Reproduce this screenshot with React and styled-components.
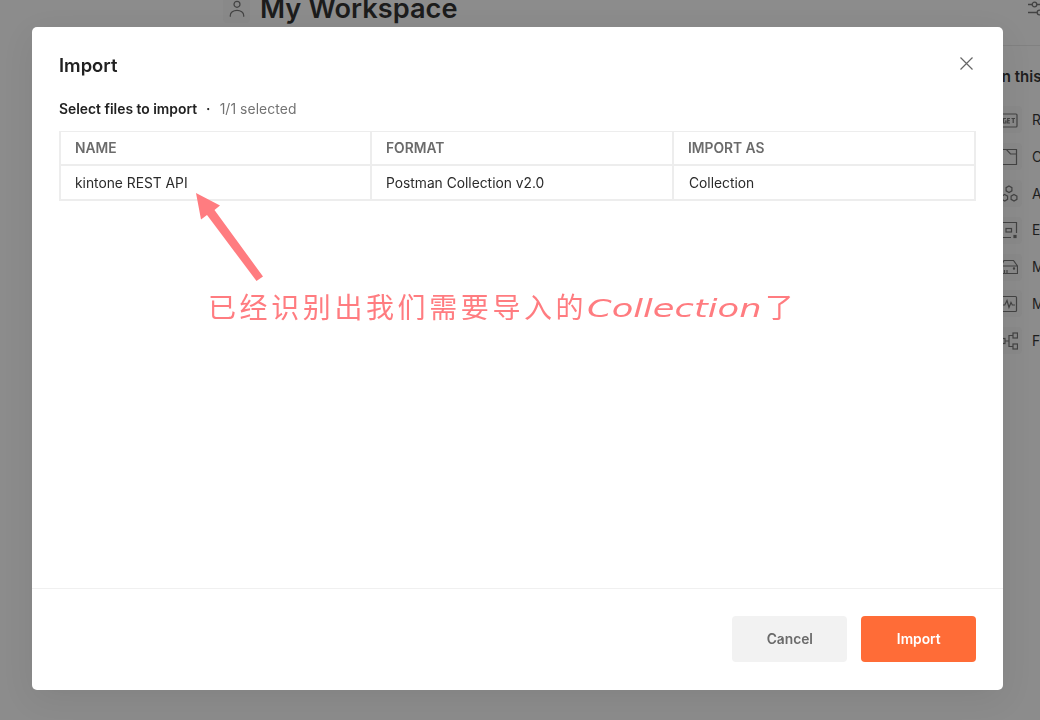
import React from "react";
import styled, { createGlobalStyle } from "styled-components";

const GlobalStyle = createGlobalStyle`
  * { box-sizing: border-box; }
  body {
    margin: 0;
    overflow: hidden;
    background: #8c8c8c;
    font-family: Inter, "Noto Sans CJK SC", sans-serif;
    color: #212121;
  }
`;

const Page = styled.div`
  width: 1040px;
  height: 720px;
  overflow: hidden;
  display: grid;
  grid-template-columns: 980px 60px;
  background: #8c8c8c;
`;

const WorkspaceHeader = styled.header`
  display: flex;
  align-items: center;
  gap: 10px;
  height: 34px;
  margin: -8px 0 0 223px;
`;

const IconTile = styled.span`
  flex: none;
  display: flex;
  align-items: center;
  justify-content: center;
  width: 27px;
  height: 27px;
  border-radius: 4px;
  background: #898989;
`;

const WorkspaceTitle = styled.h1`
  margin: 0;
  font-size: 27.2px;
  line-height: 34px;
  font-weight: 600;
  color: #1c1c1c;
`;

const Sidebar = styled.aside`
  overflow: hidden;
  white-space: nowrap;
`;

const SidebarTools = styled.div`
  display: flex;
  height: 46px;
  padding: 0 0 0 47px;
  border-bottom: 1px solid #818181;
`;

const SidebarTitle = styled.h2`
  margin: 21px 0 0 17.7px;
  font-size: 15px;
  line-height: 20px;
  font-weight: 600;
  color: #1e1e1e;
`;

const SidebarList = styled.ul`
  list-style: none;
  margin: 14.6px 0 0;
  padding: 0 0 0 15px;
`;

const SidebarItem = styled.li`
  display: flex;
  align-items: center;
  gap: 10px;
  height: 36.8px;
  font-size: 13.8px;
  color: #1e1e1e;
`;

const Glyph = styled.svg`
  display: block;
  flex: none;
  fill: none;
  stroke: ${(p) => p.$color || "#434343"};
  stroke-width: ${(p) => p.$weight || 1.2};
`;

const Overlay = styled.div`
  position: fixed;
  inset: 0;
  display: flex;
  align-items: flex-start;
  padding: 26.6px 0 0 31.7px;
`;

const Dialog = styled.section`
  display: flex;
  flex-direction: column;
  width: 971.3px;
  height: 663px;
  border-radius: 5px;
  background: #fff;
  box-shadow: 0 9px 34px rgba(0, 0, 0, 0.07);
`;

const DialogHeader = styled.header`
  display: flex;
  justify-content: space-between;
  align-items: flex-start;
  padding: 26px 29px 0 27.3px;
  height: 70.9px;
`;

const DialogTitle = styled.h2`
  margin: 0;
  font-size: 18.4px;
  line-height: 25px;
  font-weight: 600;
`;

const CloseButton = styled.button`
  margin: 3px 0 0;
  padding: 0;
  border: 0;
  background: none;
`;

const DialogBody = styled.div`
  flex: 1;
  padding: 0 27px 0 27.3px;
`;

const Selection = styled.p`
  display: flex;
  margin: 0 0 12px;
  padding-top: 1.5px;
  font-size: 13.87px;
  line-height: 20px;
  font-weight: 600;
`;

const Dot = styled.span`
  width: 22.6px;
  text-align: center;
`;

const Count = styled.span`
  font-weight: 400;
  color: #737373;
  letter-spacing: 0.08px;
`;

const Table = styled.div`
  border: 2px solid #ededed;
  border-top-width: 1px;
`;

const Row = styled.div`
  display: grid;
  grid-template-columns: 311px 302px 1fr;
  height: ${(p) => (p.$head ? "34px" : "33px")};
  border-bottom: ${(p) => (p.$head ? "2px solid #ededed" : "0")};
  font-size: 13.8px;
  line-height: ${(p) => (p.$head ? "32px" : "34px")};
  font-weight: ${(p) => (p.$head ? 600 : 400)};
  color: ${(p) => (p.$head ? "#6b6b6b" : "#2b2b2b")};
`;

const Cell = styled.div`
  padding-left: ${(p) => p.$inset || 14}px;
  border-right: ${(p) => (p.$last ? "0" : "2px solid #ededed")};
`;

const DialogFooter = styled.footer`
  display: flex;
  justify-content: flex-end;
  gap: 14px;
  height: 102px;
  padding: 27.4px 27.2px 0;
  border-top: 1.5px solid #f0f0f0;
`;

const Button = styled.button`
  width: 115px;
  height: 46px;
  padding: 0 0 0 1px;
  border: 0;
  border-radius: 4px;
  font: 600 13.8px Inter, sans-serif;
  background: ${(p) => (p.$primary ? "#ff6c37" : "#f2f2f2")};
  color: ${(p) => (p.$primary ? "#fff" : "#6b6b6b")};
`;

const Arrow = styled.svg`
  position: absolute;
  left: 190px;
  top: 188px;
`;

const Note = styled.div`
  position: absolute;
  left: 208px;
  top: 286px;
  display: flex;
  height: 40px;
  line-height: 40px;
  white-space: nowrap;
  color: #ff7c80;
`;

const Hanzi = styled.span`
  font-family: "Noto Sans CJK SC", sans-serif;
  font-size: 28px;
  font-weight: 400;
  letter-spacing: 3.6px;
`;

const Latin = styled.span`
  width: 178px;
  padding-top: 3px;
  font-family: "DejaVu Sans", sans-serif;
  font-size: 24px;
  font-style: italic;
  transform: scaleX(1.47);
  transform-origin: left;
`;

const sidebarItems = [
  {
    label: "R",
    icon: (
      <>
        <rect x="1" y="3" width="16" height="13" rx="1" />
        <path d="M6 7.500H3.500V12H6V10H5M10 7.500H7.700V12H10M7.700 9.700H9.700M11.500 7.500H15M13.200 7.500V12" />
      </>
    ),
  },
  {
    label: "C",
    icon: <path d="M0 1.500h6.500l4 4.500h6v10.500H0M7 1.500h9.500V6" />,
  },
  {
    label: "A",
    icon: (
      <path d="M9 1l2.900 1.600v3.200L9 7.500 6.100 5.800V2.600zM4.700 9.500l2.900 1.600v3.200l-2.900 1.700-2.900-1.700v-3.200zM14 9.500l2.900 1.600v3.200L14 16l-2.900-1.700v-3.200z" />
    ),
  },
  {
    label: "E",
    icon: (
      <>
        <path d="M1 1.500h15.500V12M1 1.500v15h10" />
        <rect x="6" y="7.500" width="5.500" height="3.500" />
        <rect x="14" y="14.500" width="2" height="2" fill="#434343" />
      </>
    ),
  },
  {
    label: "M",
    icon: (
      <>
        <path d="M1 8l3-5.500h9.500L17.500 8v7.500H1zM1 8h16.500M4.500 12v3.500M7 12v3.500" />
        <circle cx="14" cy="10.500" r=".6" fill="#434343" />
      </>
    ),
  },
  {
    label: "M",
    icon: (
      <>
        <rect x="1" y="1.500" width="15.500" height="15" rx="1" />
        <path d="M2.500 10h2.300L7 5.500l2 7 2-5 1.300 2.500H15" />
      </>
    ),
  },
  {
    label: "F",
    icon: (
      <>
        <rect x="1" y="6.500" width="4" height="5" />
        <rect x="13" y="1" width="4.500" height="5" />
        <rect x="13" y="12" width="4.500" height="5" />
        <path d="M5 9h4M13 3.500H9v11h4" />
      </>
    ),
  },
];

export default function App() {
  return (
    <>
      <GlobalStyle />
      <Page>
        <WorkspaceHeader>
          <IconTile>
            <Glyph width="18" height="18" viewBox="0 0 18 18">
              <circle cx="9" cy="4.300" r="3" />
              <path d="M2.300 16.800v-1.500a6.700 5 0 0 1 13.400 0v1.500" />
            </Glyph>
          </IconTile>
          <WorkspaceTitle>My Workspace</WorkspaceTitle>
        </WorkspaceHeader>
        <Sidebar>
          <SidebarTools>
            <Glyph width="18" height="17" viewBox="0 0 18 17" $weight={1.3}>
              <path d="M1 4.500h4M10 4.500h8M1 12.500h9M15 12.500h3" />
              <circle cx="7.500" cy="4.500" r="2.300" />
              <circle cx="12.500" cy="12.500" r="2.300" />
            </Glyph>
          </SidebarTools>
          <SidebarTitle>In this</SidebarTitle>
          <SidebarList>
            {sidebarItems.map((item, i) => (
              <SidebarItem key={i}>
                <IconTile>
                  <Glyph width="18" height="18" viewBox="0 0 18 18">
                    {item.icon}
                  </Glyph>
                </IconTile>
                {item.label}
              </SidebarItem>
            ))}
          </SidebarList>
        </Sidebar>
      </Page>
      <Overlay>
        <Dialog role="dialog" aria-modal="true">
          <DialogHeader>
            <DialogTitle>Import</DialogTitle>
            <CloseButton>
              <Glyph width="15" height="15" viewBox="0 0 15 15" $color="#666">
                <path d="M1.500 1.500l12 12M13.500 1.500l-12 12" />
              </Glyph>
            </CloseButton>
          </DialogHeader>
          <DialogBody>
            <Selection>
              Select files to import
              <Dot>·</Dot>
              <Count>1/1 selected</Count>
            </Selection>
            <Table>
              <Row $head>
                <Cell>NAME</Cell>
                <Cell>FORMAT</Cell>
                <Cell $last>IMPORT AS</Cell>
              </Row>
              <Row>
                <Cell>kintone REST API</Cell>
                <Cell>Postman Collection v2.0</Cell>
                <Cell $last $inset={15}>Collection</Cell>
              </Row>
            </Table>
          </DialogBody>
          <DialogFooter>
            <Button>Cancel</Button>
            <Button $primary>Import</Button>
          </DialogFooter>
        </Dialog>
        <Arrow width="80" height="100" viewBox="0 0 80 100">
          <path
            d="M6 5L30 17.500 24.500 22 73 88.500 66.500 93 17 27 11 31.500z"
            fill="#ff7c80"
          />
        </Arrow>
        <Note>
          <Hanzi>已经识别出我们需要导入的</Hanzi>
          <Latin>Collection</Latin>
          <Hanzi>了</Hanzi>
        </Note>
      </Overlay>
    </>
  );
}
